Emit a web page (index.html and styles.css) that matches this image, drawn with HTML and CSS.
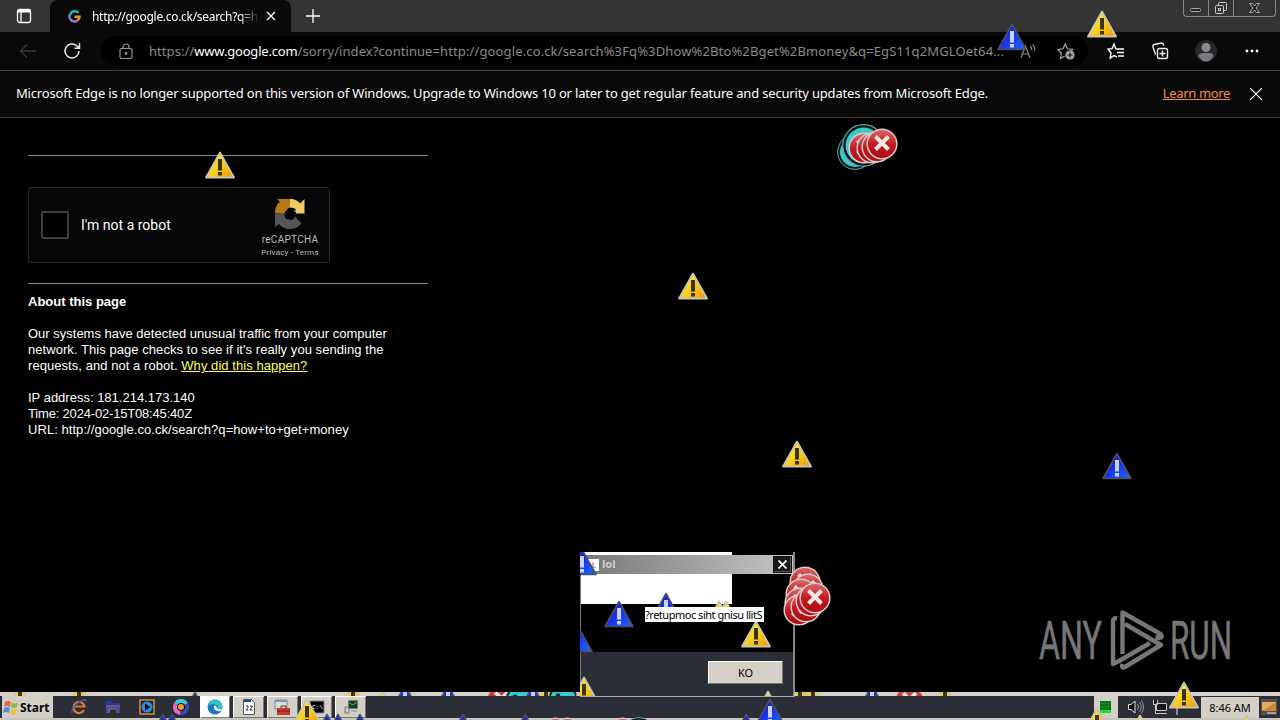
FILE: index.html
```html
<!DOCTYPE html>
<html lang="en">
<head>
  <meta charset="UTF-8">
  <meta name="viewport" content="width=device-width, initial-scale=1.0">
  <title>http://google.co.ck/search?q=how+to+get+money</title>
  <link rel="stylesheet" href="styles.css">
</head>
<body>
  <header class="tabs">
    <svg class="tab-menu" width="16" height="16" viewBox="0 0 16 16" fill="none" stroke="#fff">
      <rect x="1.500" y="1.500" width="13" height="13" rx="2" stroke-width="1.300"/>
      <path d="M1.500 3h13" stroke-width="3"/><path d="M5 4v10" stroke-width="1.300"/>
    </svg>
    <div class="tab">
      <svg class="google" width="13" height="13" viewBox="0 0 13 13" fill="none" stroke-width="2.500">
        <path d="M10.500 3A5 5 0 0 0 2.200 4.200" stroke="#25b9c8"/>
        <path d="M2.200 4.200A5 5 0 0 0 2.200 9" stroke="#3f9ae8"/>
        <path d="M2.200 9A5 5 0 0 0 9.500 10.500" stroke="#b86bd0"/>
        <path d="M9.500 10.500A5 5 0 0 0 11.500 6.700H6.500" stroke="#dc9a30"/>
      </svg>
      <span class="tab-title">http://google.co.ck/search?q=h</span>
      <svg width="10" height="10" viewBox="0 0 10 10" stroke="#fff" stroke-width="1.400"><path d="M1 1l8 8M9 1L1 9"/></svg>
    </div>
    <svg class="new-tab" width="14" height="14" viewBox="0 0 14 14" stroke="#fff" stroke-width="1.300"><path d="M7 0v14M0 7h14"/></svg>
    <div class="window-buttons">
      <svg width="24" height="16" viewBox="0 0 24 16" fill="#222" stroke="#aaa"><rect x="6.500" y="8.500" width="10" height="3" rx="1"/></svg>
      <svg width="24" height="16" viewBox="0 0 24 16" fill="#333" stroke="#ccc"><rect x="9.500" y="2.500" width="8" height="8" rx="1"/><rect x="6.500" y="5.500" width="8" height="8" rx="1"/><rect x="9.500" y="8.500" width="2" height="2"/></svg>
      <svg width="41" height="16" viewBox="0 0 41 16" fill="#222" stroke="#aaa"><path d="M15.500 3.500h3l2 2.500 2-2.500h3l-3.500 4.500 3.500 4.500h-3l-2-2.500-2 2.500h-3L19 8z"/></svg>
    </div>
  </header>

  <div class="toolbar">
    <svg class="back" width="18" height="16" viewBox="0 0 18 16" fill="none" stroke="#393939" stroke-width="1.300"><path d="M17 8H1.500M8 1.500L1.500 8 8 14.500"/></svg>
    <svg class="reload" width="18" height="18" viewBox="0 0 18 18" fill="none" stroke="#eee" stroke-width="1.500"><path d="M16 9a7 7 0 1 1-2.300-5.200L16 6M16.500 1.200V6.200h-5"/></svg>
    <div class="address">
      <svg class="lock" width="14" height="17" viewBox="0 0 14 17" fill="none" stroke="#999" stroke-width="1.200"><rect x="1" y="5.500" width="12" height="10" rx="1.500"/><path d="M4 5.500V4a3 3 0 0 1 6 0v1.500"/><circle cx="7" cy="10.500" r=".8" fill="#999"/></svg>
      <span class="url">https://<b>www.google.com</b>/sorry/index?continue=<span class="query">http://google.co.ck/search%3Fq%3Dhow%2Bto%2Bget%2Bmoney&amp;q=EgS11q2MGLOet64...</span></span>
      <svg class="read" width="17" height="16" viewBox="0 0 17 16" fill="none" stroke="#888" stroke-width="1.200"><path d="M1 15L5.500 3 10 15M2.600 11h6M10 3q2 1.500 1.500 4M12.500 1.500q3 2.500 2 6.500"/></svg>
      <svg class="fav" width="18" height="18" viewBox="0 0 18 18" fill="none" stroke="#aaa" stroke-width="1.200"><path d="M8 14l-4.500 2.300.9-5L1 7.500l5-.7L8.300 2l2.200 4.800 5 .7-1.500 1.800"/><circle cx="13" cy="13" r="4" fill="#aaa"/><path d="M13 10.500v5M10.500 13h5" stroke="#111"/></svg>
    </div>
    <div class="actions">
      <svg width="18" height="18" viewBox="0 0 18 18" fill="none" stroke="#fff" stroke-width="1.400"><path d="M11 7.200L8.800 6.700 7 2 5 6.700l-4 .5 3 3.500L3.200 16 7 13.500l3 1.500M11 7h6M10 10.500h7M11 14h6"/></svg>
      <svg width="18" height="18" viewBox="0 0 18 18" fill="none" stroke="#eee" stroke-width="1.400"><rect x="6.500" y="6.500" width="10" height="10" rx="2"/><path d="M11.500 8.500v6M8.500 11.500h6M4.500 12.500L2 5q-.5-2 1.300-2.500l7-1.500q2 0 2.500 2.500"/></svg>
      <svg width="22" height="22" viewBox="0 0 22 22"><circle cx="11" cy="11" r="11" fill="#25272a"/><circle cx="11" cy="7.500" r="4.500" fill="#898c91"/><path d="M3.500 16q0-3 4-3h7q4 0 4 3-3 5.500-7.500 5.500T3.500 16z" fill="#777a80"/></svg>
      <svg class="more" width="14" height="4" viewBox="0 0 14 4" fill="#fff"><circle cx="2" cy="2" r="1.400"/><circle cx="7" cy="2" r="1.400"/><circle cx="12" cy="2" r="1.400"/></svg>
    </div>
  </div>

  <div class="notice">
    <span class="notice-text">Microsoft Edge is no longer supported on this version of Windows. Upgrade to Windows 10 or later to get regular feature and security updates from Microsoft Edge.</span>
    <a class="learn">Learn more</a>
    <svg width="12" height="12" viewBox="0 0 12 12" stroke="#fff" stroke-width="1.200"><path d="M0 0l12 12M12 0L0 12"/></svg>
  </div>

  <main class="page">
    <hr>
    <div class="captcha">
      <span class="checkbox"></span>
      <span class="captcha-label">I'm not a robot</span>
      <div class="captcha-brand">
        <svg width="32" height="32" viewBox="0 0 32 32">
          <path d="M1 15.500C1 10 3 6 6 4L3 1h13v9q-4 0-4 5.500z" fill="#b87817"/>
          <path d="M16 1c5 0 8 2 10 4.500L30.500 1v14.500H18l4-4q-2-2-6-2z" fill="#efcb67"/>
          <path d="M1 15.500h9q1 6 6 6 3 0 5-3l6.500 7Q23 31 16 31q-7 0-11-5l-4 3z" fill="#555558"/>
          <path d="M16 15.500l-2-5h4l-1 4 5-1v4l-4-1 2 4-3 2-1.500-4-3 3-2-3 3-2-3-2 2-2z" fill="#050505"/>
        </svg>
        <span class="brand-name">reCAPTCHA</span>
        <span class="brand-links">Privacy - Terms</span>
      </div>
    </div>
    <hr>
    <div class="about">
      <b>About this page</b>
      <p>Our systems have detected unusual traffic from your computer<br><span class="wide">network. This page checks to see if it's really you sending the</span><br><span class="wide">requests, and not a robot. <a>Why did this happen?</a></span></p>
      <p>IP address: 181.214.173.140<br><span class="time">Time: 2024-02-15T08:45:40Z</span><br><span class="wide">URL: http://google.co.ck/search?q=how+to+get+money</span></p>
    </div>
  </main>

  <footer class="taskbar">
    <div class="start">
      <svg width="16" height="16" viewBox="0 0 16 16"><path d="M2 3q3-2 6 0L7 8Q4 6 1 8z" fill="#e8663c"/><path d="M9 3.500q3 2 6 0L14 8q-3 2-6 0z" fill="#7dbb48"/><path d="M1 9q3-2 6 0l-1 5q-3-2-6 0z" fill="#4b8fd8"/><path d="M8 9.500q3 2 6 0l-1 5q-3 2-6 0z" fill="#efc23c"/></svg>
      <b>Start</b>
    </div>
    <div class="quick">
      <svg width="16" height="16" viewBox="0 0 16 16" fill="none"><path d="M13 11a5.500 5.500 0 1 1 .5-3.500H4" stroke="#e07a28" stroke-width="2.200"/><path d="M1 14Q0 9 7 4t8-2" stroke="#4754b8" stroke-width="1.500"/></svg>
      <svg width="16" height="16" viewBox="0 0 16 16"><path d="M1 2h6v2h8v3H1z" fill="#2438a0"/><path d="M1 7h14v7h-3v-4H5v4H1z" fill="#3549c0"/><path d="M1 7h14M4 14v-4h8v4" stroke="#b9683d" fill="none"/></svg>
      <svg width="16" height="16" viewBox="0 0 16 16"><rect x="1" y="1" width="14" height="14" fill="#123" stroke="#e08a30" stroke-width="1.500"/><circle cx="8" cy="8" r="5.500" fill="#268fec"/><path d="M6 4.500L11.500 8 6 11.500z" fill="#000"/></svg>
      <svg width="16" height="16" viewBox="0 0 16 16"><path d="M8 8L1 4a8 8 0 0 1 14 0z" fill="#40c7db"/><path d="M8 8L1 4a8 8 0 0 0 6 12z" fill="#e36bc0"/><path d="M8 8l-1 8A8 8 0 0 0 15 4z" fill="#3c48ad"/><circle cx="8" cy="8" r="4" fill="#111"/><circle cx="8" cy="8" r="3" fill="#f39b26"/></svg>
    </div>
    <div class="tasks">
      <div class="task active"><svg width="16" height="16" viewBox="0 0 16 16"><circle cx="8" cy="8" r="7.500" fill="#1877bd"/><path d="M.8 7Q2 1 8 .5T15.500 8q-1 3-5 2.500 1-5-4-5.500Q3 5 .8 7z" fill="#38c1c4"/><path d="M7 7q-1 6 7 5l1-2q-5 1-6-3 0-1-2 0z" fill="#fff"/></svg></div>
      <div class="task"><svg width="16" height="16" viewBox="0 0 16 16"><path d="M2.500 .5h8l3 3v12h-11z" fill="#fff" stroke="#555"/><path d="M3 2h7" stroke="#234a9a" stroke-width="2"/><path d="M5 7h2v1.500L5 11h2.500M9 7h2.500L9 11h2.500" fill="none" stroke="#225"/></svg></div>
      <div class="task"><svg width="17" height="17" viewBox="0 0 17 17"><path d="M1 1h12v9H1z" fill="#ddd" stroke="#888"/><path d="M1 2h12" stroke="#79a" stroke-width="2"/><path d="M3 9h13v7H3z" fill="#c73535"/><path d="M7 9V7h5v2M3 12h13" stroke="#721" fill="none"/></svg></div>
      <div class="task"><svg width="16" height="16" viewBox="0 0 16 16"><path d="M1 2h14v12H1z" fill="#000" stroke="#888"/><text x="3" y="10" fill="#fff" font-family="Liberation Mono" font-size="6">C:\</text></svg></div>
      <div class="task"><svg width="16" height="16" viewBox="0 0 16 16"><path d="M2 8h4v6H2z" fill="#ccc" stroke="#777"/><path d="M5.500 1.500h9v8h-9z" fill="#163c29" stroke="#777"/><path d="M6 4l4 2 4-3M8 12h6" stroke="#48b45e" fill="none"/></svg></div>
    </div>
    <div class="tray">
      <div class="meter"><svg width="11" height="12" viewBox="0 0 11 12"><path d="M0 0h11v9H0z" fill="#0a6c18"/><path d="M0 9h11v3H0z" fill="#16e92c"/><path d="M0 2.500h11M0 5.500h11M2.500 0v9M5.500 0v9M8.500 0v9" stroke="#0b8a20"/></svg></div>
      <svg class="volume" width="17" height="16" viewBox="0 0 17 16" fill="none" stroke="#ddd"><path d="M1.500 5.500H4L8 2v12L4 10.500H1.500z" fill="#111"/><path d="M10.500 5q2 3 0 6M12.500 3q3.500 5 0 10M14.500 1.500q4 6.500 0 13" stroke="#999"/></svg>
      <svg class="network" width="16" height="16" viewBox="0 0 16 16" fill="#17181b" stroke="#ccc"><path d="M4.500 4.500h10v7h-10zM6 14.500h9M1.500 1v4.500h4V1M3.500 6v8.500H7"/></svg>
      <svg class="flag" width="6" height="16" viewBox="0 0 6 16"><path d="M2 0v16" stroke="#eee"/></svg>
      <span class="clock">8:46 AM</span>
      <svg class="desktop" width="16" height="16" viewBox="0 0 16 16"><rect width="16" height="16" fill="#5a4c48"/><path d="M1 3h14v9H1z" fill="#c98534"/><path d="M1 3h14L3 11H1z" fill="#e5ac60"/><path d="M6 14h9" stroke="#eee"/></svg>
    </div>
  </footer>

  <div class="dialog">
    <div class="dialog-title">
      <svg width="13" height="12" viewBox="0 0 13 12"><path d="M0 0h13v12H0z" fill="#fff"/><path d="M7 3v5q1 2 3 0" stroke="#777" fill="none"/></svg>
      <b>lol</b>
      <span class="dialog-close"><svg width="9" height="9" viewBox="0 0 9 9" stroke="#fff" stroke-width="1.700"><path d="M.5.500l8 8M8.500.500l-8 8"/></svg></span>
    </div>
    <div class="dialog-body"></div>
    <div class="dialog-footer"><button>KO</button></div>
  </div>

  <!-- stray cursor icons painted over the whole desktop -->
  <svg class="overlay" width="1280" height="720" viewBox="0 0 1280 720">
    <defs>
      <linearGradient id="gold" x1="0" y1="0" x2="1" y2="1"><stop offset="0" stop-color="#fff42a"/><stop offset=".5" stop-color="#fbd31c"/><stop offset="1" stop-color="#ec9408"/></linearGradient>
      <linearGradient id="azure" x1="0" y1="0" x2="1" y2="1"><stop offset="0" stop-color="#0707c8"/><stop offset=".5" stop-color="#1734ef"/><stop offset="1" stop-color="#2168fa"/></linearGradient>
      <linearGradient id="crimson" x1="0" y1="0" x2="0" y2="1"><stop offset="0" stop-color="#dc6b6e"/><stop offset=".5" stop-color="#c4191f"/><stop offset="1" stop-color="#a80b12"/></linearGradient>
      <symbol id="warn" viewBox="0 0 30 28">
        <path d="M15 1.500L29 26.500H1z" fill="url(#gold)" stroke="#c9c4b4" stroke-width="1.800" stroke-linejoin="round"/>
        <path d="M13 8h4v11.500h-4zM13 21h4v3.500h-4z" fill="#3a3210"/>
      </symbol>
      <symbol id="blue" viewBox="0 0 30 28">
        <path d="M15 1.500L29 26.500H1z" fill="url(#azure)" stroke="#4d5258" stroke-width="1.600" stroke-linejoin="round"/>
        <path d="M13 8h4v11.500h-4zM13 21h4v3.500h-4z" fill="#cdd3ff"/>
      </symbol>
      <symbol id="error" viewBox="0 0 32 32">
        <circle cx="16" cy="16" r="14.800" fill="url(#crimson)" stroke="#d8cdca" stroke-width="1.500"/>
        <path d="M9.500 8.500l13 13M22.500 8.500l-13 13" stroke="#f1e9e5" stroke-width="4"/>
      </symbol>
      <symbol id="cyan" viewBox="0 0 36 36">
        <circle cx="18" cy="18" r="17.400" fill="#111" stroke="#5cb0b2"/>
        <circle cx="18" cy="18" r="15" fill="#39caca"/>
        <path d="M10 12h4v4h-4zM13 20l5 4" fill="#111" stroke="#135"/>
      </symbol>
      <clipPath id="top-edge"><path d="M0 692h580v4H0zM796 692h484v4H796z"/></clipPath>
      <clipPath id="in-dialog"><path d="M580 552h215v144H580z"/></clipPath>
      <clipPath id="under-label"><path d="M640 590h100v18H640z"/></clipPath>
    </defs>
    <g clip-path="url(#top-edge)">
      <use href="#warn" x="5" y="684" width="30" height="28"/>
      <use href="#warn" x="64" y="684" width="30" height="28"/>
      <use href="#blue" x="180" y="691" width="30" height="28"/>
      <use href="#warn" x="338" y="684" width="30" height="28"/>
      <use href="#warn" x="368" y="690" width="30" height="28"/>
      <use href="#blue" x="390" y="684" width="30" height="28"/>
      <use href="#blue" x="433" y="684" width="30" height="28"/>
      <use href="#error" x="486" y="684" width="31" height="31"/>
      <use href="#cyan" x="505" y="685" width="30" height="30"/>
      <use href="#blue" x="518" y="684" width="30" height="28"/>
      <use href="#warn" x="531" y="684" width="30" height="28"/>
      <use href="#cyan" x="548" y="684" width="30" height="30"/>
      <use href="#warn" x="568" y="684" width="30" height="28"/>
      <use href="#warn" x="785" y="680" width="30" height="28"/>
      <use href="#warn" x="798" y="684" width="30" height="28"/>
      <use href="#blue" x="857" y="684" width="30" height="28"/>
      <use href="#error" x="894" y="685" width="31" height="31"/>
      <use href="#warn" x="930" y="684" width="30" height="28"/>
    </g>
    <g>
      <use href="#blue" x="148" y="713" width="30" height="28"/>
      <use href="#blue" x="157" y="713" width="30" height="28"/>
      <use href="#blue" x="312" y="713" width="30" height="28"/>
      <use href="#blue" x="323" y="713" width="30" height="28"/>
      <use href="#blue" x="345" y="713" width="30" height="28"/>
      <use href="#blue" x="448" y="713" width="30" height="28"/>
      <use href="#blue" x="510" y="713" width="30" height="28"/>
      <use href="#error" x="540" y="717" width="31" height="31"/>
      <use href="#error" x="552" y="717" width="31" height="31"/>
      <use href="#error" x="607" y="717" width="31" height="31"/>
      <use href="#cyan" x="622" y="717" width="34" height="34"/>
      <use href="#blue" x="731" y="713" width="30" height="28"/>
      <use href="#warn" x="1082" y="707" width="30" height="28"/>
      <use href="#warn" x="1125" y="714" width="30" height="28"/>
      <use href="#warn" x="1232" y="714" width="30" height="28"/>
    </g>
    <g clip-path="url(#in-dialog)">
      <use href="#blue" x="567" y="548" width="30" height="28"/>
      <use href="#blue" x="563" y="625" width="30" height="28"/>
      <use href="#warn" x="569" y="676" width="30" height="28"/>
      <use href="#warn" x="753" y="690" width="30" height="28"/>
      <use href="#warn" x="784" y="686" width="30" height="28"/>
      <use href="#blue" x="604" y="600" width="30" height="28"/>
      <use href="#warn" x="741" y="620" width="30" height="28"/>
    </g>
    <g clip-path="url(#under-label)">
      <use href="#blue" x="651" y="592" width="30" height="28"/>
      <use href="#warn" x="704" y="600" width="30" height="28"/>
      <use href="#warn" x="711" y="600" width="30" height="28"/>
    </g>
    <use href="#cyan" x="837" y="134" width="36" height="36"/>
    <use href="#cyan" x="842" y="124" width="43" height="43"/>
    <use href="#error" x="848" y="132" width="32" height="32"/>
    <use href="#error" x="856" y="132" width="32" height="32"/>
    <use href="#error" x="861" y="131" width="32" height="32"/>
    <use href="#error" x="866" y="128" width="32" height="32"/>
    <use href="#error" x="789" y="566" width="32" height="32"/>
    <use href="#error" x="792" y="573" width="32" height="32"/>
    <use href="#error" x="785" y="578" width="32" height="32"/>
    <use href="#error" x="784" y="587" width="32" height="32"/>
    <use href="#error" x="783" y="594" width="32" height="32"/>
    <use href="#error" x="790" y="591" width="32" height="32"/>
    <use href="#error" x="795" y="585" width="32" height="32"/>
    <use href="#error" x="799" y="582" width="32" height="32"/>
    <use href="#warn" x="205" y="151" width="30" height="28"/>
    <use href="#warn" x="678" y="272" width="30" height="28"/>
    <use href="#warn" x="782" y="440" width="30" height="28"/>
    <use href="#warn" x="1087" y="10" width="30" height="28"/>
    <use href="#warn" x="1169" y="681" width="30" height="28"/>
    <use href="#warn" x="292" y="698" width="30" height="28"/>
    <use href="#blue" x="997" y="23" width="30" height="28"/>
    <use href="#blue" x="1102" y="452" width="30" height="28"/>
    <use href="#blue" x="755" y="698" width="30" height="28"/>
    <!-- watermark -->
    <g class="watermark">
      <text x="1039" y="659" textLength="63" lengthAdjust="spacingAndGlyphs">ANY</text>
      <text x="1170" y="659" textLength="62" lengthAdjust="spacingAndGlyphs">RUN</text>
      <path d="M1117 618.500q-4-1-4 3V664l6-3 31-18M1122.500 654v-41.500l38 21.500q3 3-1 4l-4-1M1125 624l36 21-36 22q-4 2-2.500-3"/>
    </g>
  </svg>
  <span class="dialog-text">?retupmoc siht gnisu llitS</span>
</body>
</html>
```

FILE: styles.css
```css
body {
  margin: 0;
  width: 1280px;
  height: 720px;
  display: flex;
  flex-direction: column;
  position: relative;
  overflow: hidden;
  background-color: #000;
  color: #fff;
  font-family: "Noto Sans", "Open Sans", sans-serif;
}

svg {
  display: block;
  flex-shrink: 0;
}

.tabs {
  display: flex;
  height: 32px;
  background-color: #333;
}

.tab-menu {
  margin: 8px 10px 0 16px;
}

.tab {
  display: flex;
  align-items: center;
  box-sizing: border-box;
  width: 241px;
  height: 32px;
  margin-left: 8px;
  padding: 0 15px 0 18px;
  border-radius: 8px 8px 0 0;
  background-color: #090909;
}

.tab-title {
  width: 168px;
  margin: 0 6px 0 11px;
  white-space: nowrap;
  font-size: 12px;
  letter-spacing: -0.3px;
  -webkit-mask-image: linear-gradient(90deg, #000 88%, transparent);
  mask-image: linear-gradient(90deg, #000 88%, transparent);
}

.new-tab {
  margin: 9px 0 0 15px;
}

.window-buttons {
  display: flex;
  height: 16px;
  margin: 0 4px 0 auto;
  border: 1px solid #888;
  border-top: none;
  border-radius: 0 0 4px 4px;
}

.window-buttons svg + svg {
  border-left: 1px solid #888;
}

.toolbar {
  display: flex;
  align-items: center;
  height: 38px;
  background-color: #090909;
  border-bottom: 1px solid #444;
}

.back {
  margin-left: 19px;
}

.reload {
  margin-left: 26px;
}

.address {
  display: flex;
  align-items: center;
  box-sizing: border-box;
  width: 987px;
  height: 30px;
  margin-left: 20px;
  padding-left: 18px;
  border-radius: 15px;
  background-color: #000;
}

.url {
  width: 857px;
  margin-left: 16px;
  color: #8b8b8b;
  font-size: 13px;
  letter-spacing: 0.06px;
  white-space: nowrap;
}

.url b {
  color: #fff;
  font-weight: normal;
  letter-spacing: -0.18px;
}

.query {
  letter-spacing: 0.13px;
}

.read {
  margin-left: 14px;
}

.fav {
  margin-left: 20px;
}

.actions {
  display: flex;
  align-items: center;
  gap: 26px;
  margin-left: 19px;
}

.more {
  margin-left: 2px;
}

.notice {
  display: flex;
  align-items: center;
  height: 46px;
  padding: 0 18px 0 16px;
  border-bottom: 1px solid #3d3d3d;
  background-color: #080808;
  font-size: 13px;
  white-space: nowrap;
}

.notice-text {
  padding-bottom: 2px;
  letter-spacing: -0.175px;
}

.learn {
  margin: 0 20px 0 auto;
  padding-bottom: 2px;
  color: #f38b4a;
  letter-spacing: -0.35px;
  text-decoration: underline;
}

.page {
  width: 400px;
  padding: 37px 28px 0;
  flex-grow: 1;
  font-family: "Liberation Sans", Arial, sans-serif;
  font-size: 13px;
  line-height: 16px;
}

.page hr {
  height: 1px;
  margin: 0;
  border: none;
  background-color: #888;
}

.captcha {
  display: flex;
  align-items: center;
  box-sizing: border-box;
  width: 302px;
  height: 76px;
  margin: 31px 0 20px;
  padding-left: 12px;
  border: 1px solid #2b2b2b;
  border-radius: 3px;
  background-color: #060606;
}

.checkbox {
  width: 24px;
  height: 24px;
  border: 2px solid #3e3e3e;
  border-radius: 2px;
  background-color: #000;
}

.captcha-label {
  margin-left: 12px;
  font-family: Roboto, sans-serif;
  font-size: 14px;
  white-space: nowrap;
}

.captcha-brand {
  display: flex;
  flex-direction: column;
  align-items: center;
  width: 70px;
  height: 55px;
  margin: 0 4px 0 auto;
  font-family: Roboto, sans-serif;
  color: #bbb;
}

.brand-name {
  margin-top: 2px;
  font-size: 10px;
  line-height: 15px;
  letter-spacing: 0.3px;
}

.brand-links {
  font-size: 8px;
  line-height: 11px;
  letter-spacing: 0.2px;
}

.about {
  padding-top: 10px;
  white-space: nowrap;
}

.about p {
  margin: 16px 0;
}

.about a {
  color: #ffff55;
  text-decoration: underline;
}

.wide {
  letter-spacing: 0.055px;
}

.time {
  letter-spacing: -0.18px;
}

.taskbar {
  display: flex;
  box-sizing: border-box;
  height: 28px;
  padding-left: 2px;
  border-top: 4px solid #d4d0c8;
  border-bottom: 2px solid #c8c5bf;
  background-color: #2b2e37;
}

.start {
  display: flex;
  align-items: center;
  width: 51px;
  background-color: #d4d0c8;
  color: #000;
  font-size: 12px;
}

.start svg {
  margin: 0 1px 0 1px;
}

.quick {
  display: flex;
  align-items: center;
  gap: 18px;
  margin-left: 18px;
}

.tasks {
  display: flex;
  gap: 3px;
  margin-left: 11px;
}

.task {
  display: flex;
  align-items: center;
  justify-content: center;
  width: 31px;
  background-color: #d4d0c8;
  box-shadow: inset 1px 1px #fff, inset -1px -1px #777;
}

.task.active {
  width: 30px;
  background-color: #fff;
}

.tray {
  display: flex;
  align-items: center;
  margin-left: auto;
}

.meter {
  padding: 5px 7px 5px 6px;
  background-color: #d4d0c8;
}

.volume {
  margin-left: 9px;
}

.network {
  margin-left: 8px;
}

.flag {
  margin-left: 7px;
}

.clock {
  width: 58px;
  margin-left: 20px;
  background-color: #d4d0c8;
  color: #000;
  font-size: 11px;
  line-height: 21px;
  text-align: center;
}

.desktop {
  margin: 0 3px 0 2px;
}

.dialog {
  position: absolute;
  left: 580px;
  top: 552px;
  display: flex;
  flex-direction: column;
  box-sizing: border-box;
  width: 215px;
  height: 145px;
  border-right: 2px solid #85878b;
  border-bottom: 1px solid #aaa;
  border-left: 1px solid #777;
  background: linear-gradient(#fff, #fff) 0 0 / 151px 3px no-repeat #000;
}

.dialog-title {
  display: flex;
  align-items: center;
  height: 19px;
  margin: 3px 0 0 1px;
  padding-left: 4px;
  background: linear-gradient(90deg, #777, #c6c6c6);
  color: #d4d0c8;
  font-size: 11px;
}

.dialog-title b {
  margin: -2px 0 0 3px;
}

.dialog-close {
  display: flex;
  align-items: center;
  justify-content: center;
  width: 17px;
  height: 15px;
  margin: -1px 1px 0 auto;
  border: 1px solid #111;
  background-color: #16181d;
  box-shadow: inset -1px -1px #555;
}

.dialog-body {
  height: 78px;
  background: linear-gradient(#fff, #fff) 0 0 / 151px 30px no-repeat;
}

.dialog-footer {
  flex-grow: 1;
  padding: 9px 10px 0;
  background-color: #2b2e37;
  text-align: right;
}

.dialog-footer button {
  display: block;
  width: 75px;
  height: 23px;
  margin-left: auto;
  padding: 0;
  border: 1px solid #fff;
  border-right-color: #777;
  border-bottom-color: #777;
  background-color: #d4d0c8;
  color: #000;
  font-family: "Noto Sans", sans-serif;
  font-size: 11px;
}

.dialog-text {
  position: absolute;
  left: 645px;
  top: 607px;
  width: 119px;
  height: 15px;
  background-color: #fff;
  color: #000;
  font-size: 11px;
  line-height: 15px;
  letter-spacing: -0.48px;
  white-space: nowrap;
}

.overlay {
  position: absolute;
  left: 0;
  top: 0;
  pointer-events: none;
}

.watermark text {
  fill: #777;
  stroke: #777;
  stroke-width: 0.6px;
  font-family: Roboto, sans-serif;
  font-size: 53px;
}

.watermark path {
  fill: none;
  stroke: #777;
  stroke-width: 4.400px;
  stroke-linejoin: round;
}
```
